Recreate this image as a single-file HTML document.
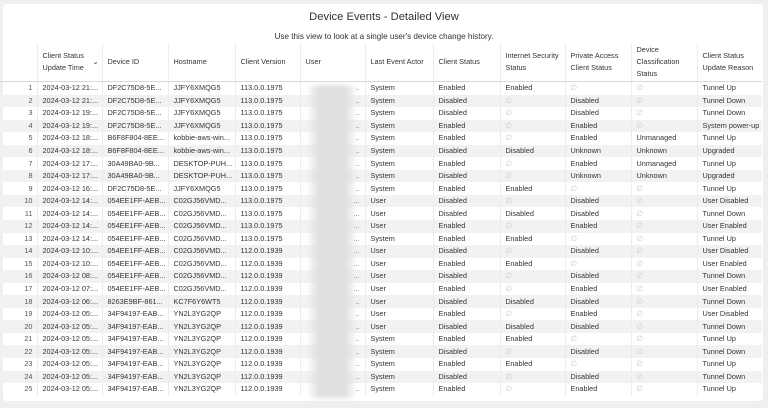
<!DOCTYPE html>
<html><head><meta charset="utf-8"><style>
html,body{margin:0;padding:0;width:768px;height:408px;overflow:hidden;background:#efefef;font-family:"Liberation Sans",sans-serif;color:#333}
.card{position:absolute;left:3px;top:4px;width:760px;height:397px;background:#fff;border-radius:4px}
.t{position:absolute;left:0;width:768px;text-align:center}
table{position:absolute;left:0;top:43px;border-collapse:collapse;table-layout:fixed;font-size:7.3px}
td,th{padding:0 0 0 5px;white-space:nowrap;overflow:hidden;border-left:1px solid #ececec;text-align:left}
th{font-weight:normal;height:38px;line-height:12px;vertical-align:middle;border-bottom:1px solid #d8d8d8}
td{height:12.55px;line-height:12px}
td:first-child,th:first-child{text-align:right;padding:0 4px 0 0;border-left:none;color:#555}
tr:nth-child(even) td{background:#f2f2f2}
.n{color:#ccc}
td:nth-child(6){text-align:right;padding-right:5px;color:#666}
</style></head><body>
<div class="card"></div>
<div class="t" style="top:11px;font-size:11.2px;color:#333">Device Events - Detailed View</div>
<div class="t" style="top:32px;font-size:8.1px;color:#333">Use this view to look at a single user's device change history.</div>
<table>
<colgroup><col style="width:37px"><col style="width:65px"><col style="width:66px"><col style="width:67px"><col style="width:65px"><col style="width:65px"><col style="width:68px"><col style="width:67px"><col style="width:65px"><col style="width:66px"><col style="width:66px"><col style="width:65px"></colgroup>
<thead><tr><th></th><th style="position:relative">Client Status<br>Update Time<span style="position:absolute;left:55px;top:13px">⌄</span></th><th>Device ID</th><th>Hostname</th><th>Client Version</th><th>User</th><th>Last Event Actor</th><th>Client Status</th><th>Internet Security<br>Status</th><th>Private Access<br>Client Status</th><th>Device<br>Classification<br>Status</th><th>Client Status<br>Update Reason</th></tr></thead>
<tbody>
<tr><td>1</td><td>2024-03-12 21:...</td><td>DF2C75D8-5E...</td><td>JJFY6XMQG5</td><td>113.0.0.1975</td><td>..</td><td>System</td><td>Enabled</td><td>Enabled</td><td class="n">∅</td><td class="n">∅</td><td>Tunnel Up</td></tr>
<tr><td>2</td><td>2024-03-12 21:...</td><td>DF2C75D8-5E...</td><td>JJFY6XMQG5</td><td>113.0.0.1975</td><td>..</td><td>System</td><td>Disabled</td><td class="n">∅</td><td>Disabled</td><td class="n">∅</td><td>Tunnel Down</td></tr>
<tr><td>3</td><td>2024-03-12 19:...</td><td>DF2C75D8-5E...</td><td>JJFY6XMQG5</td><td>113.0.0.1975</td><td>..</td><td>System</td><td>Disabled</td><td class="n">∅</td><td>Disabled</td><td class="n">∅</td><td>Tunnel Down</td></tr>
<tr><td>4</td><td>2024-03-12 19:...</td><td>DF2C75D8-5E...</td><td>JJFY6XMQG5</td><td>113.0.0.1975</td><td>..</td><td>System</td><td>Enabled</td><td class="n">∅</td><td>Enabled</td><td class="n">∅</td><td>System power-up</td></tr>
<tr><td>5</td><td>2024-03-12 18:...</td><td>B6F8F804-8EE...</td><td>kobbie-aws-win...</td><td>113.0.0.1975</td><td>..</td><td>System</td><td>Enabled</td><td class="n">∅</td><td>Enabled</td><td>Unmanaged</td><td>Tunnel Up</td></tr>
<tr><td>6</td><td>2024-03-12 18:...</td><td>B6F8F804-8EE...</td><td>kobbie-aws-win...</td><td>113.0.0.1975</td><td>..</td><td>System</td><td>Disabled</td><td>Disabled</td><td>Unknown</td><td>Unknown</td><td>Upgraded</td></tr>
<tr><td>7</td><td>2024-03-12 17:...</td><td>30A49BA0-9B...</td><td>DESKTOP-PUH...</td><td>113.0.0.1975</td><td>..</td><td>System</td><td>Enabled</td><td class="n">∅</td><td>Enabled</td><td>Unmanaged</td><td>Tunnel Up</td></tr>
<tr><td>8</td><td>2024-03-12 17:...</td><td>30A49BA0-9B...</td><td>DESKTOP-PUH...</td><td>113.0.0.1975</td><td>..</td><td>System</td><td>Disabled</td><td class="n">∅</td><td>Unknown</td><td>Unknown</td><td>Upgraded</td></tr>
<tr><td>9</td><td>2024-03-12 16:...</td><td>DF2C75D8-5E...</td><td>JJFY6XMQG5</td><td>113.0.0.1975</td><td>..</td><td>System</td><td>Enabled</td><td>Enabled</td><td class="n">∅</td><td class="n">∅</td><td>Tunnel Up</td></tr>
<tr><td>10</td><td>2024-03-12 14:...</td><td>054EE1FF-AEB...</td><td>C02GJ56VMD...</td><td>113.0.0.1975</td><td>...</td><td>User</td><td>Disabled</td><td class="n">∅</td><td>Disabled</td><td class="n">∅</td><td>User Disabled</td></tr>
<tr><td>11</td><td>2024-03-12 14:...</td><td>054EE1FF-AEB...</td><td>C02GJ56VMD...</td><td>113.0.0.1975</td><td>...</td><td>User</td><td>Disabled</td><td>Disabled</td><td>Disabled</td><td class="n">∅</td><td>Tunnel Down</td></tr>
<tr><td>12</td><td>2024-03-12 14:...</td><td>054EE1FF-AEB...</td><td>C02GJ56VMD...</td><td>113.0.0.1975</td><td>...</td><td>User</td><td>Enabled</td><td class="n">∅</td><td>Enabled</td><td class="n">∅</td><td>User Enabled</td></tr>
<tr><td>13</td><td>2024-03-12 14:...</td><td>054EE1FF-AEB...</td><td>C02GJ56VMD...</td><td>113.0.0.1975</td><td>...</td><td>System</td><td>Enabled</td><td>Enabled</td><td class="n">∅</td><td class="n">∅</td><td>Tunnel Up</td></tr>
<tr><td>14</td><td>2024-03-12 10:...</td><td>054EE1FF-AEB...</td><td>C02GJ56VMD...</td><td>112.0.0.1939</td><td>...</td><td>User</td><td>Disabled</td><td class="n">∅</td><td>Disabled</td><td class="n">∅</td><td>User Disabled</td></tr>
<tr><td>15</td><td>2024-03-12 10:...</td><td>054EE1FF-AEB...</td><td>C02GJ56VMD...</td><td>112.0.0.1939</td><td>...</td><td>User</td><td>Enabled</td><td>Enabled</td><td class="n">∅</td><td class="n">∅</td><td>User Enabled</td></tr>
<tr><td>16</td><td>2024-03-12 08:...</td><td>054EE1FF-AEB...</td><td>C02GJ56VMD...</td><td>112.0.0.1939</td><td>...</td><td>User</td><td>Disabled</td><td class="n">∅</td><td>Disabled</td><td class="n">∅</td><td>Tunnel Down</td></tr>
<tr><td>17</td><td>2024-03-12 07:...</td><td>054EE1FF-AEB...</td><td>C02GJ56VMD...</td><td>112.0.0.1939</td><td>...</td><td>User</td><td>Enabled</td><td class="n">∅</td><td>Enabled</td><td class="n">∅</td><td>User Enabled</td></tr>
<tr><td>18</td><td>2024-03-12 06:...</td><td>8263E9BF-861...</td><td>KC7F6Y6WT5</td><td>112.0.0.1939</td><td>..</td><td>User</td><td>Disabled</td><td>Disabled</td><td>Disabled</td><td class="n">∅</td><td>Tunnel Down</td></tr>
<tr><td>19</td><td>2024-03-12 05:...</td><td>34F94197-EAB...</td><td>YN2L3YG2QP</td><td>112.0.0.1939</td><td>..</td><td>User</td><td>Enabled</td><td class="n">∅</td><td>Enabled</td><td class="n">∅</td><td>User Disabled</td></tr>
<tr><td>20</td><td>2024-03-12 05:...</td><td>34F94197-EAB...</td><td>YN2L3YG2QP</td><td>112.0.0.1939</td><td>..</td><td>User</td><td>Disabled</td><td>Disabled</td><td>Disabled</td><td class="n">∅</td><td>Tunnel Down</td></tr>
<tr><td>21</td><td>2024-03-12 05:...</td><td>34F94197-EAB...</td><td>YN2L3YG2QP</td><td>112.0.0.1939</td><td>..</td><td>System</td><td>Enabled</td><td>Enabled</td><td class="n">∅</td><td class="n">∅</td><td>Tunnel Up</td></tr>
<tr><td>22</td><td>2024-03-12 05:...</td><td>34F94197-EAB...</td><td>YN2L3YG2QP</td><td>112.0.0.1939</td><td>..</td><td>System</td><td>Disabled</td><td class="n">∅</td><td>Disabled</td><td class="n">∅</td><td>Tunnel Down</td></tr>
<tr><td>23</td><td>2024-03-12 05:...</td><td>34F94197-EAB...</td><td>YN2L3YG2QP</td><td>112.0.0.1939</td><td>..</td><td>System</td><td>Enabled</td><td>Enabled</td><td class="n">∅</td><td class="n">∅</td><td>Tunnel Up</td></tr>
<tr><td>24</td><td>2024-03-12 05:...</td><td>34F94197-EAB...</td><td>YN2L3YG2QP</td><td>112.0.0.1939</td><td>..</td><td>System</td><td>Disabled</td><td class="n">∅</td><td>Disabled</td><td class="n">∅</td><td>Tunnel Down</td></tr>
<tr><td>25</td><td>2024-03-12 05:...</td><td>34F94197-EAB...</td><td>YN2L3YG2QP</td><td>112.0.0.1939</td><td>..</td><td>System</td><td>Enabled</td><td class="n">∅</td><td>Enabled</td><td class="n">∅</td><td>Tunnel Up</td></tr>
</tbody></table>
<div style="position:absolute;left:307px;top:85px;width:50px;height:313px;background:linear-gradient(90deg,rgba(225,225,225,0),#e0e0e0 22%,#e0e0e0 78%,rgba(225,225,225,0));filter:blur(2px)"></div>
</body></html>
